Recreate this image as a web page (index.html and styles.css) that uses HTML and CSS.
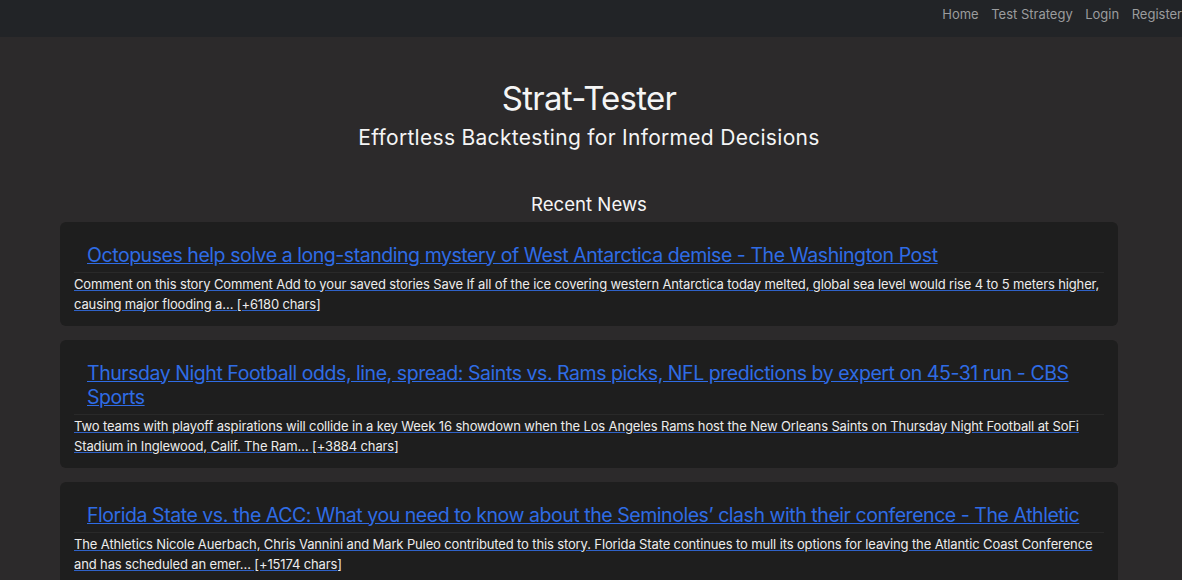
FILE: index.html
```html
<!DOCTYPE html>
<html lang="en">
<head>
<meta charset="utf-8">
<title>Strat-Tester</title>
<link rel="stylesheet" href="styles.css">
</head>
<body>
<nav class="navbar">
  <ul class="nav-links">
    <li><a href="#">Home</a></li>
    <li><a href="#">Test Strategy</a></li>
    <li><a href="#">Login</a></li>
    <li><a href="#">Register</a></li>
  </ul>
</nav>
<main class="main">
  <header class="hero">
    <h1 class="hero-title">Strat-Tester</h1>
    <p class="hero-sub">Effortless Backtesting for Informed Decisions</p>
  </header>
  <section class="news">
    <h2 class="news-heading">Recent News</h2>
    <a class="card" href="#">
      <h3 class="card-title">Octopuses help solve a long-standing mystery of West Antarctica demise - The Washington Post</h3>
      <p class="card-text">Comment on this story Comment Add to your saved stories Save If all of the ice covering western Antarctica today melted, global sea level would rise 4 to 5 meters higher, causing major flooding a… [+6180 chars]</p>
    </a>
    <a class="card" href="#">
      <h3 class="card-title">Thursday Night Football odds, line, spread: Saints vs. Rams picks, NFL predictions by expert on 45-31 run - CBS Sports</h3>
      <p class="card-text">Two teams with playoff aspirations will collide in a key Week 16 showdown when the Los Angeles Rams host the New Orleans Saints on Thursday Night Football at SoFi Stadium in Inglewood, Calif. The Ram… [+3884 chars]</p>
    </a>
    <a class="card" href="#">
      <h3 class="card-title">Florida State vs. the ACC: What you need to know about the Seminoles’ clash with their conference - The Athletic</h3>
      <p class="card-text">The Athletics Nicole Auerbach, Chris Vannini and Mark Puleo contributed to this story. Florida State continues to mull its options for leaving the Atlantic Coast Conference and has scheduled an emer… [+15174 chars]</p>
    </a>
  </section>
</main>
</body>
</html>
```

FILE: styles.css
```css
* { box-sizing: border-box; }
html, body { margin: 0; padding: 0; }
body {
  background: #2c2a2b;
  color: #f2f2f2;
  font-family: Inter, "Noto Sans", "DejaVu Sans", sans-serif;
  overflow: hidden;
}
.navbar {
  height: 37px;
  background: #222427;
  display: flex;
  justify-content: flex-end;
  align-items: flex-start;
}
.nav-links {
  list-style: none;
  margin: 0;
  padding: 3px 0 0 0;
  display: flex;
  gap: 12.5px;
}
.nav-links a {
  color: #9b9c9e;
  text-decoration: none;
  font-size: 13px;
  line-height: 18px;
}
.main {
  padding: 0 64px 0 60px;
}
.hero {
  text-align: center;
  padding-top: 41px;
}
.hero-title {
  margin: 0 0 6px;
  font-size: 33px;
  font-weight: 400;
  line-height: 40px;
  letter-spacing: -0.75px;
  color: #f5f5f5;
}
.hero-sub {
  margin: 0;
  font-size: 21px;
  font-weight: 400;
  line-height: 28px;
  letter-spacing: 0.3px;
  color: #f5f5f5;
}
.news {
  display: flex;
  flex-direction: column;
  gap: 14px;
  padding-top: 40px;
}
.news-heading {
  margin: 0 0 -8px;
  text-align: center;
  font-size: 18.6px;
  font-weight: 400;
  line-height: 24px;
  color: #f5f5f5;
}
.card {
  display: block;
  background: #1e1e1e;
  border-radius: 6px;
  padding: 20.5px 14px 12.5px 14px;
  text-decoration: none;
}
.card-title {
  margin: 0 0 5px 13px;
  font-size: 19.5px;
  font-weight: 400;
  line-height: 24px;
  letter-spacing: -0.45px;
  color: #2f6ce5;
  text-decoration: underline;
  text-decoration-color: #2f6ce5;
}
.card-text {
  margin: 0;
  padding-top: 1px;
  border-top: 1px solid rgba(255, 255, 255, 0.05);
  font-size: 13px;
  line-height: 20px;
  letter-spacing: -0.13px;
  color: #ececec;
  text-decoration: underline;
  text-decoration-color: #2f62c8;
}
```
